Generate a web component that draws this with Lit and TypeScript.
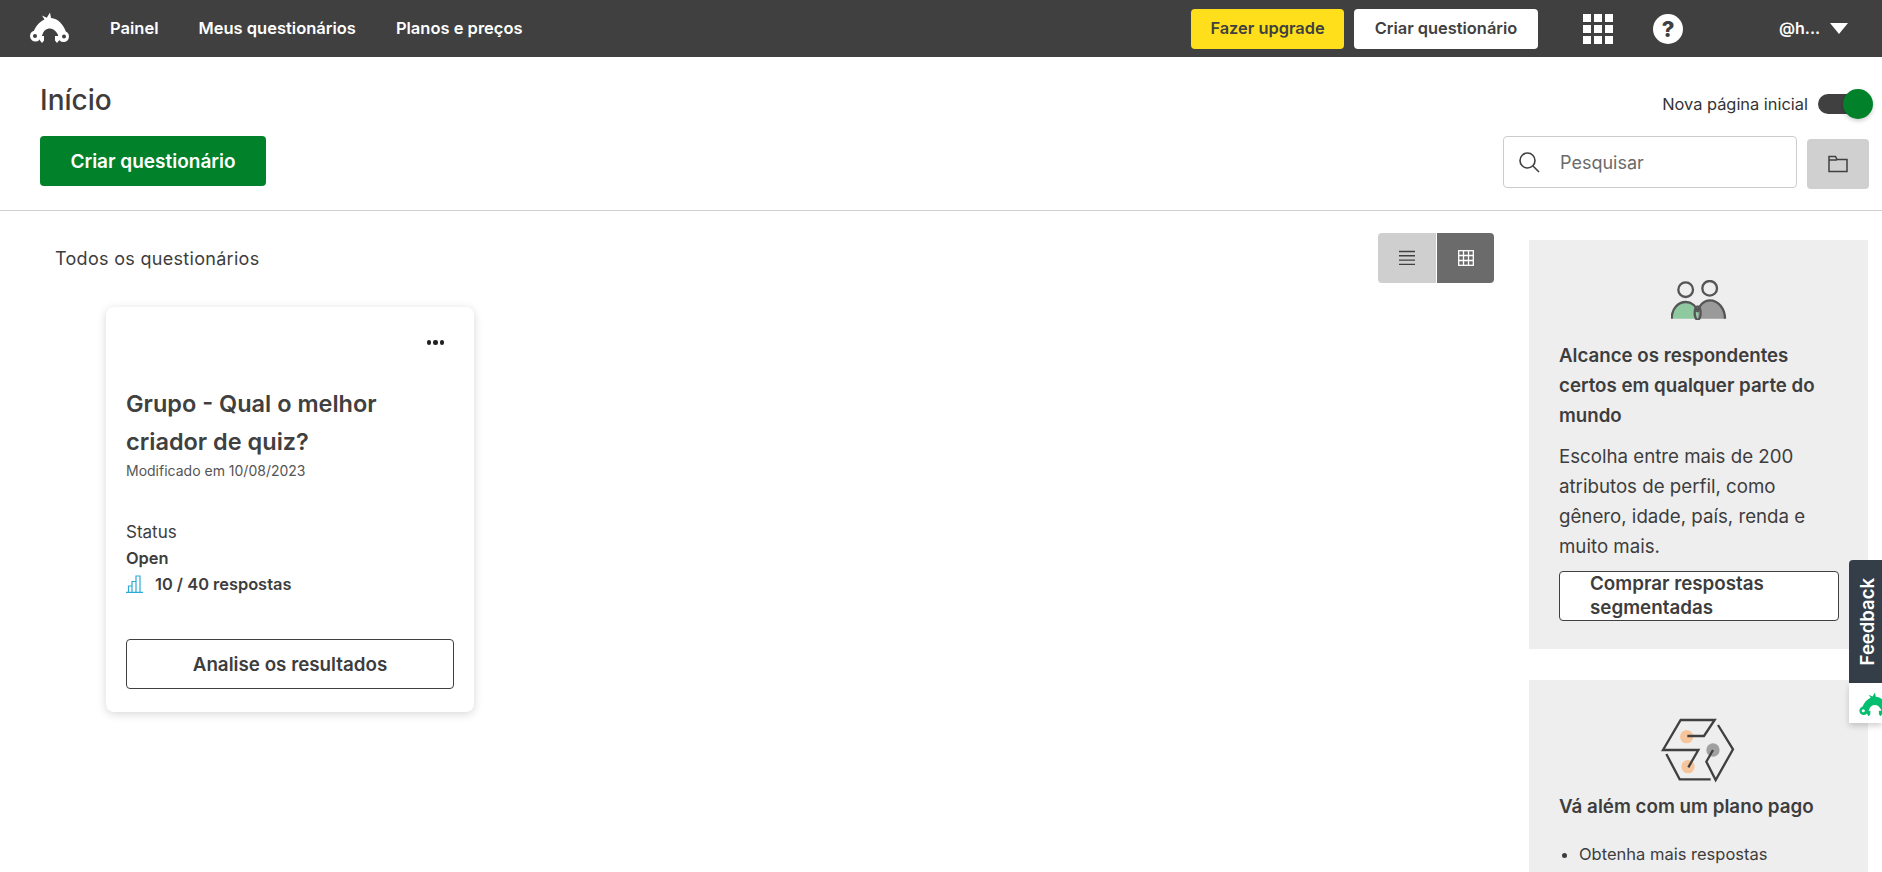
import { LitElement, html, css, svg } from "lit";
import { customElement } from "lit/decorators.js";

const monkey = (c: string, hole: string) => svg`
  <path fill=${c} d="M14.5 7.5 L12 3.5 L16.8 5.8 L20 0.5 L21 6 C28 6.5 33 12 36 20 L29 24 L27.5 22 C26 19 23.5 16.5 20 16.5 C16 16.5 13.5 19 12.5 22.5 L11 25 L3.5 20 C6 14 9 10 14.5 7.5 Z"/>
  <circle cx="5.5" cy="24" r="5.5" fill=${c}/><circle cx="33.5" cy="24.5" r="5.5" fill=${c}/>
  <path fill=${c} d="M9 24 L14 24 L14 28.5 L12 31 L10 28.5 Z M29.5 24 L25 24 L25 28.5 L27 31 L29 28.5 Z"/>
  <circle cx="5" cy="24" r="2" fill=${hole}/><circle cx="34" cy="24.5" r="2" fill=${hole}/>`;

@customElement("app-root")
export class AppRoot extends LitElement {
  static styles = css`
    :host { display: block; height: 872px; overflow: hidden; position: relative; background: #fff;
      font-family: "Inter", "Liberation Sans", sans-serif; color: #3d3d3d; }
    * { box-sizing: border-box; }
    header { height: 57px; background: #404040; display: flex; align-items: center; color: #fff; }
    .logo { width: 40px; height: 32px; margin-left: 30px; margin-right: 40px; flex: none; position: relative; top: -1px; }
    nav { display: flex; gap: 40px; font-size: 16.5px; font-weight: 600; padding-bottom: 2px; }
    .hr { margin-left: auto; display: flex; align-items: center; }
    .hbtn { height: 40px; border-radius: 4px; display: flex; align-items: center; justify-content: center; font-size: 16.4px; font-weight: 600; color: #404040; padding-bottom: 2px; }
    .up { width: 153px; background: #ffdf1b; margin-right: 10px; }
    .cr { width: 184px; background: #fff; margin-right: 45px; }
    .apps { width: 30px; height: 30px; display: grid; grid-template-columns: repeat(3, 8px); gap: 3px; margin-right: 40px; }
    .apps i { background: #fff; display: block; }
    .help { width: 30px; height: 30px; border-radius: 50%; background: #fff; color: #404040; font-size: 22px; font-weight: 800; display: flex; align-items: center; justify-content: center; margin-right: 96px; }
    .user { font-size: 16px; font-weight: 600; width: 51px; padding-bottom: 2px; }
    .caret { width: 0; height: 0; border-left: 9px solid transparent; border-right: 9px solid transparent; border-top: 11px solid #fff; margin-right: 34px; }
    .sub { height: 154px; border-bottom: 1px solid #d0d0d0; padding: 0 13px 0 40px; }
    .row1 { height: 79px; display: flex; align-items: center; justify-content: space-between; padding-top: 8px; }
    h1 { margin: 0 0 2px; font-size: 28px; font-weight: 550; line-height: 36px; color: #403c3c; }
    .nova { display: flex; align-items: center; font-size: 16.4px; color: #333; position: relative; top: 3px; margin-right: -4px; }
    .track { width: 43px; height: 20px; background: #404040; border-radius: 10px; margin-left: 10px; position: relative; margin-right: 12px; }
    .knob { position: absolute; width: 30px; height: 30px; border-radius: 50%; background: #00812a; right: -12px; top: -5px; box-shadow: 0 2px 4px rgba(0,0,0,.2); }
    .row2 { display: flex; justify-content: space-between; align-items: flex-start; }
    .create { width: 226px; height: 50px; border-radius: 4px; background: #00812a; color: #fff; font-size: 19px; font-weight: 600; display: flex; align-items: center; justify-content: center; }
    .tools { display: flex; align-items: flex-start; gap: 10px; }
    .search { width: 294px; height: 52px; border: 1px solid #ccc; border-radius: 4px; display: flex; align-items: center; padding-left: 14px; gap: 20px; color: #6b6b6b; font-size: 18px; }
    .folder { width: 62px; height: 50px; margin-top: 3px; background: #d0d0d0; border-radius: 4px; display: flex; align-items: center; justify-content: center; }
    .body { display: flex; }
    .main { width: 1529px; padding-right: 35px; padding-top: 22px; flex: none; }
    .top { display: flex; justify-content: space-between; align-items: center; padding-left: 55px; height: 50px; }
    .top span { font-size: 18px; letter-spacing: .3px; color: #3d3d3d; }
    .view { display: flex; border-radius: 4px; overflow: hidden; height: 50px; }
    .view div { display: flex; align-items: center; justify-content: center; }
    .v1 { width: 58px; background: #cfcfcf; }
    .v2 { width: 57px; background: #6b6b6b; margin-left: 1px; }
    .card { margin: 24px 0 0 106px; width: 368px; height: 405px; background: #fff; border-radius: 8px; box-shadow: 0 2px 10px rgba(0,0,0,.16); padding: 0 20px 0 20px; }
    .dots { display: flex; justify-content: flex-end; gap: 2px; padding: 33px 10px 0 0; height: 78px; }
    .dots i { width: 4.5px; height: 4.5px; background: #222; border-radius: 50%; display: block; }
    h2 { margin: 0; font-size: 23.5px; line-height: 38px; font-weight: 600; color: #404040; }
    .mod { font-size: 14px; line-height: 20px; color: #555; }
    .st { font-size: 17px; line-height: 26px; margin-top: 38px; }
    .st.b { font-size: 16.4px; margin-top: 0; }
    .b { font-weight: 600; }
    .resp { display: flex; align-items: center; gap: 12px; font-size: 16.4px; font-weight: 600; line-height: 26px; }
    .an { margin-top: 42px; height: 50px; width: 328px; border: 1px solid #404040; border-radius: 4px; display: flex; align-items: center; justify-content: center; font-size: 18.8px; font-weight: 600; }
    aside { width: 339px; padding-top: 29px; flex: none; display: flex; flex-direction: column; gap: 31px; }
    .panel { background: #eee; padding: 0 29px 0 30px; }
    .p1 { height: 409px; padding-top: 40px; }
    .icon { display: flex; justify-content: center; }
    h3 { margin: 21px 0 11px; font-size: 18.7px; line-height: 30px; font-weight: 600; color: #3d3d3d; }
    p { margin: 0; font-size: 18.7px; line-height: 30px; color: #3d3d3d; }
    .buy { margin-top: 9px; height: 50px; background: #fff; border: 1px solid #404040; border-radius: 4px; padding-left: 30px; font-size: 18.8px; font-weight: 600; line-height: 24px; overflow: hidden; }
    .p2 { padding-top: 30px; height: 300px; }
    .p2 h3 { margin: 2px 0 0; font-size: 18.8px; }
    ul { margin: 18px 0 0; padding-left: 20px; font-size: 16.5px; line-height: 28px; }
    .fb { position: absolute; right: 0; top: 560px; width: 33px; }
    .fbt { height: 123px; background: #333e48; border-radius: 4px 0 0 0; color: #fff; display: flex; align-items: center; justify-content: center; }
    .fbt span { writing-mode: vertical-rl; transform: rotate(180deg); font-size: 18.5px; font-weight: 600; position: relative; left: 1px; }
    .fbl { height: 40px; background: #fff; box-shadow: 0 3px 6px rgba(0,0,0,.18); padding: 9px 0 0 10px; overflow: hidden; }
    .fbl svg { width: 32px; height: 25px; display: block; }
  `;
  render() {
    return html`
      <header>
        <svg class="logo" viewBox="0 0 40 32">${monkey("#fff", "#404040")}</svg>
        <nav><span>Painel</span><span>Meus questionários</span><span>Planos e preços</span></nav>
        <div class="hr">
          <div class="hbtn up">Fazer upgrade</div>
          <div class="hbtn cr">Criar questionário</div>
          <div class="apps">${Array.from({ length: 9 }, () => html`<i></i>`)}</div>
          <div class="help">?</div>
          <div class="user">@h...</div>
          <div class="caret"></div>
        </div>
      </header>
      <div class="sub">
        <div class="row1">
          <h1>Início</h1>
          <div class="nova">Nova página inicial<div class="track"><div class="knob"></div></div></div>
        </div>
        <div class="row2">
          <div class="create">Criar questionário</div>
          <div class="tools">
            <div class="search">
              <svg width="22" height="22" viewBox="0 0 22 22" fill="none" stroke="#404040" stroke-width="1.6"><circle cx="9.5" cy="9.5" r="7.5"/><path d="M15 15 L21 21"/></svg>
              <span>Pesquisar</span>
            </div>
            <div class="folder">
              <svg width="20" height="18" viewBox="0 0 20 18" fill="none" stroke="#404040" stroke-width="1.5"><path d="M1 16.5 V1.5 H7.5 L9 4.5 H19 V16.5 Z M1 5 H9"/></svg>
            </div>
          </div>
        </div>
      </div>
      <div class="body">
        <div class="main">
          <div class="top">
            <span>Todos os questionários</span>
            <div class="view">
              <div class="v1"><svg width="18" height="16" viewBox="0 0 18 16" stroke="#404040" stroke-width="1.4"><path d="M1 1.5H17M1 5.8H17M1 10.1H17M1 14.4H17"/></svg></div>
              <div class="v2"><svg width="16" height="16" viewBox="0 0 16 16" fill="none" stroke="#fff" stroke-width="1.3"><rect x="0.7" y="0.7" width="14.6" height="14.6"/><path d="M5.5 .7V15.3M10.5 .7V15.3M.7 5.5H15.3M.7 10.5H15.3"/></svg></div>
            </div>
          </div>
          <div class="card">
            <div class="dots"><i></i><i></i><i></i></div>
            <h2>Grupo - Qual o melhor criador de quiz?</h2>
            <div class="mod">Modificado em 10/08/2023</div>
            <div class="st">Status</div>
            <div class="st b">Open</div>
            <div class="resp">
              <svg width="17" height="18" viewBox="0 0 17 18" fill="none" stroke="#2da9d8" stroke-width="1.2"><path d="M0 17.4H17M2.5 17V11H6V17M6 17V6.5H10V17M10 17V1H14V17"/></svg>
              <span>10 / 40 respostas</span>
            </div>
            <div class="an">Analise os resultados</div>
          </div>
        </div>
        <aside>
          <div class="panel p1">
            <div class="icon">
              <svg width="56" height="40" viewBox="96 60 168 118">
                <path d="M98 175 C98 145 118 125 140 125 C158 125 172 138 176 158 L176 175 Z" fill="#8ec9a0"/>
                <path d="M176 158 C180 136 194 120 212 120 C238 120 258 145 258 175 L176 175 Z" fill="#9a9a9a"/>
                <g fill="none" stroke="#555" stroke-width="7">
                  <circle cx="140" cy="88" r="22"/><circle cx="212" cy="84" r="22"/>
                  <path d="M98 175 C98 145 118 125 140 125 C158 125 172 138 178 155"/>
                  <path d="M174 155 C180 136 194 120 212 120 C238 120 258 145 258 175"/>
                  <ellipse cx="176" cy="158" rx="9" ry="20"/>
                </g>
              </svg>
            </div>
            <h3>Alcance os respondentes certos em qualquer parte do mundo</h3>
            <p>Escolha entre mais de 200 atributos de perfil, como gênero, idade, país, renda e muito mais.</p>
            <div class="buy">Comprar respostas segmentadas</div>
          </div>
          <div class="panel p2">
            <div class="icon">
              <svg width="100" height="80" viewBox="0 0 300 240" fill="none" stroke="#404040" stroke-width="7">
                <circle cx="113" cy="80" r="20" fill="#f6c59c" stroke="none"/>
                <circle cx="117" cy="170" r="20" fill="#f6c59c" stroke="none"/>
                <circle cx="192" cy="120" r="20" fill="#a0a0a0" stroke="none"/>
                <path d="M115 78 H165 L197 30 H95 L42 120 H148 L118 172"/>
                <path d="M52 132 L92 208 H185"/>
                <path d="M207 45 L252 118 L200 210 L172 155 L192 120"/>
              </svg>
            </div>
            <h3>Vá além com um plano pago</h3>
            <ul><li>Obtenha mais respostas qualificadas</li></ul>
          </div>
        </aside>
      </div>
      <div class="fb">
        <div class="fbt"><span>Feedback</span></div>
        <div class="fbl"><svg viewBox="0 0 40 32">${monkey("#00bf6f", "#fff")}</svg></div>
      </div>
    `;
  }
}
